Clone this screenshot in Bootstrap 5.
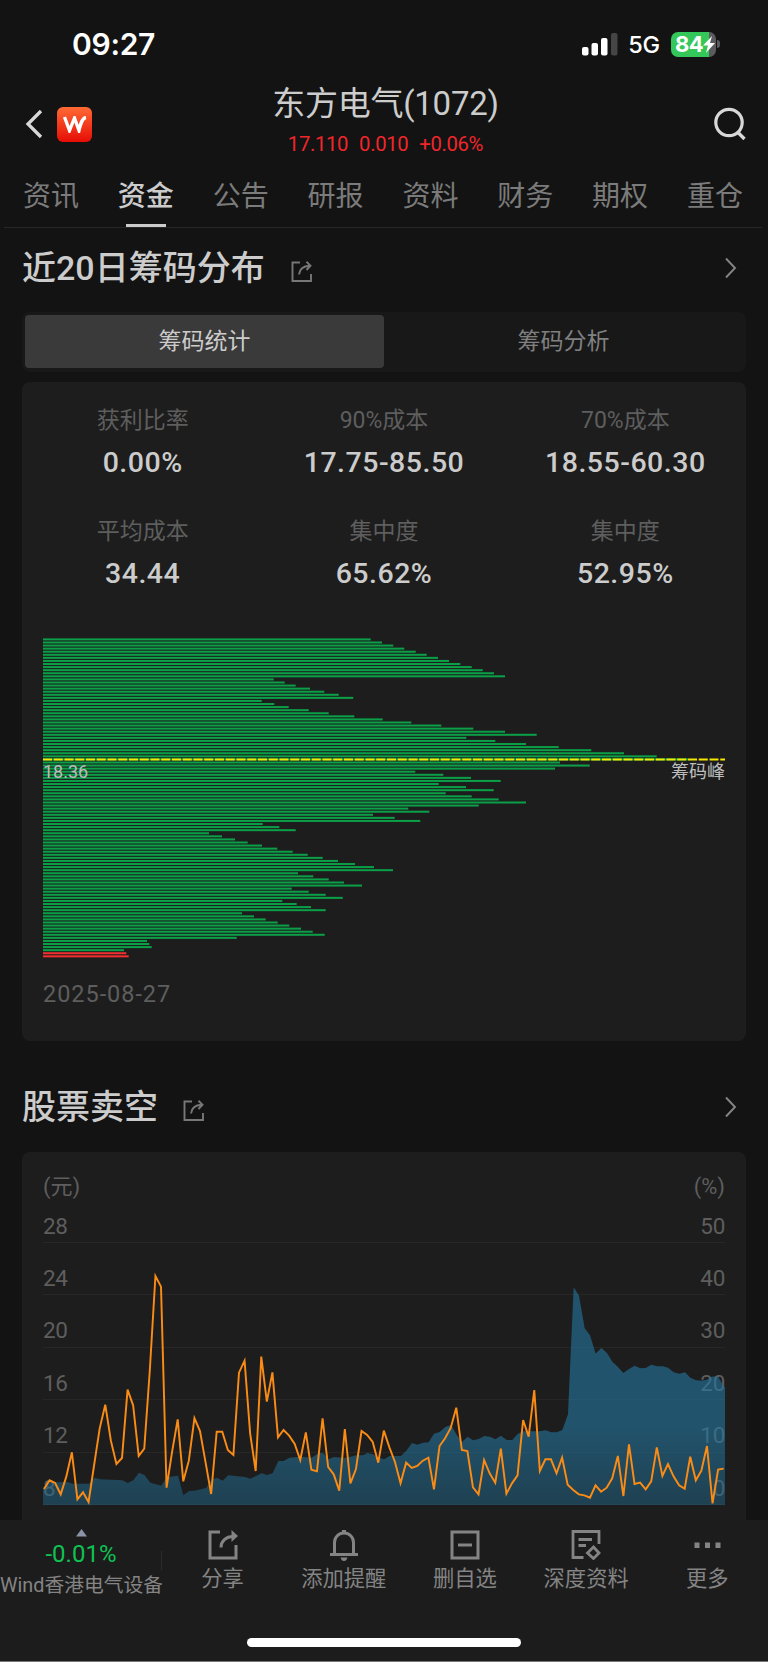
<!DOCTYPE html>
<html lang="zh-CN">
<head>
<meta charset="utf-8">
<meta name="viewport" content="width=device-width, initial-scale=1">
<title>东方电气(1072)</title>
<link href="https://cdn.jsdelivr.net/npm/bootstrap@5.3.0/dist/css/bootstrap.min.css" rel="stylesheet">
<style>
body{background:#131313;color:#ccc;font-family:Roboto,"Noto Sans CJK SC",sans-serif;height:1662px;overflow:hidden;line-height:1}
svg{display:block;flex:none}
.status{height:82px;padding:6px 48px 0 72px;font-family:Inter,sans-serif;color:#fff}
.clock{font-size:30px;font-weight:600;letter-spacing:-.3px}
.net{font-size:23.5px;font-weight:500;margin:1px 11px 0 10px;letter-spacing:-.2px}
.batt{width:45px;height:25px;border-radius:7px;background:linear-gradient(90deg,#34c759 38px,#5b5b5d 38px);font-size:22px;font-weight:700;padding-left:4px;letter-spacing:-.6px}
.batt-tip{width:3px;height:8px;border-radius:0 3px 3px 0;background:#5b5b5d;margin-left:1px}
.top-bar{height:84px;padding:0 22px 0 25px}
.app-logo{width:35px;height:35px;border-radius:6px;background:linear-gradient(#ff6a35,#e60d05);margin-left:14px}
.top-side{width:92px;padding-bottom:0}
.stock{font-size:33px;line-height:42px;letter-spacing:-.25px;font-weight:400}
.stock-box{margin-top:-9px}
.quote{font-size:20.3px;line-height:24px;color:#f0262b;gap:11px;margin-top:7px;letter-spacing:-.35px}
.tabs{height:62px;margin:0 6px 0 4px;padding:0 19px 0 19px;border-bottom:1px solid #272727;font-size:28px}
.tabs a{color:#7b7b7b;text-decoration:none;height:61px;line-height:61px;position:relative}
.tabs a.active{color:#ccc;font-weight:500}
.tabs a.active::after{content:"";position:absolute;left:8px;right:8px;bottom:0;height:3px;background:#ccc}
.section-head{padding:0 31px 0 22px}
.section-head h2{font-size:34px;font-weight:500;margin:0;line-height:48px}
.section-head .share{margin:7px 0 0 26px}
.seg{margin:0 22px;height:60px;padding:3px;border-radius:8px;background:#181818;font-size:23px;color:#808080}
.seg div{line-height:53px;border-radius:4px;height:53px;text-align:center;flex:1}
.seg .on{background:#3a3a3a;color:#ccc}
.panel{margin:0 22px;border-radius:8px;background:#1d1d1d}
.stat{height:111px;text-align:center}
.stat span{display:block;font-size:23px;line-height:32px;color:#5e5e5e}
.stat b{display:block;font-size:28.5px;line-height:40px;font-weight:500;margin-top:6px;letter-spacing:.5px}
.chips{position:relative;margin:11px 21px 0;height:320px}
.chip-cap{position:absolute;top:122px;font-size:18px;line-height:24px;color:#bdbdbd}
.dim{color:#5e5e5e}
.grid-row{height:52.4px;padding:24px 0 0;border-bottom:1px solid #272727;font-size:22.5px;line-height:22px;letter-spacing:-.3px}
#chip-panel{margin-top:10px;height:659px;padding-top:23px}
.date{margin:22px 21px 0;font-size:23.5px;line-height:28px;letter-spacing:.95px}
#short-panel{height:390px;padding:23px 21px 0}
.units{font-size:22px;line-height:24px;height:15.6px}
.bottom{height:142px;background:#1c1c1c;border-bottom:1px solid #777;color:#848484}
.index-box{width:162px;position:relative}
.chg{color:#0fc252;font-size:24px;line-height:28px;text-align:center;margin-top:3px}
.idx{font-size:19.8px;line-height:26px;margin-top:5px}
.sep{position:absolute;right:0;top:31px;width:1px;height:19px;background:#2c2c2c}
.nav-act{width:121.2px;font-size:21.3px;padding-top:10px;gap:5px}
.nav-act span{line-height:28px;white-space:nowrap}
.home-bar{position:absolute;left:247px;top:118px;width:274px;height:9px;border-radius:5px;background:#fff}
</style>
<script src="https://cdn.jsdelivr.net/npm/bootstrap@5.3.0/dist/js/bootstrap.bundle.min.js"></script>
</head>
<body>
<svg width="0" height="0" class="position-absolute">
<symbol id="share" viewBox="0 0 30 30"><path d="M12 2H2v26h26V15M13 17.5C13 11 18 6.5 25 6.5" fill="none" stroke="currentColor" stroke-width="3"/><path d="M23.5 0 30 6l-6.500 6z" fill="currentColor"/></symbol>
<symbol id="share-thin" viewBox="0 0 22 22"><path d="M9 1.500H1.500V20H20V13M8 13.500C8.500 8.500 12 5 18.500 4.700M15.500 .800l4 3.900L15.500 9" fill="none" stroke="currentColor" stroke-width="1.900"/></symbol>
<symbol id="more" viewBox="0 0 13 22"><path d="M2 1.500 11 11l-9 9.500" fill="none" stroke="currentColor" stroke-width="1.900"/></symbol>
</svg>

<div class="status d-flex align-items-center">
  <span class="clock me-auto">09:27</span>
  <svg width="36" height="23" viewBox="0 0 36 23"><g fill="#fff"><rect x="0" y="14" width="6.500" height="8.500" rx="2"/><rect x="9.500" y="10" width="6.500" height="12.500" rx="2"/><rect x="19" y="5" width="6.500" height="17.500" rx="2"/></g><rect x="29" width="6.500" height="22.500" rx="2" fill="#454545"/></svg>
  <span class="net">5G</span>
  <div class="batt d-flex align-items-center">84<svg width="12" height="17" viewBox="0 0 12 17"><path d="M9 0 0 9.500h5L3 17l9-10H7z" fill="#fff"/></svg></div>
  <div class="batt-tip"></div>
</div>

<header class="top-bar d-flex align-items-center justify-content-between">
  <div class="top-side d-flex align-items-center">
    <svg width="18" height="30" viewBox="0 0 18 30"><path d="M16 2 3 15l13 13" fill="none" stroke="#d8d8d8" stroke-width="3.300"/></svg>
    <div class="app-logo d-flex align-items-center justify-content-center"><svg width="24" height="17" viewBox="0 0 24 17"><path d="M1.500 1 6.500 14.500 11.500 2 16 14.500C17.500 8 19 2 23 1.500" fill="none" stroke="#fff" stroke-width="3.300"/></svg></div>
  </div>
  <div class="stock-box text-center">
    <div class="stock">东方电气(1072)</div>
    <div class="quote d-flex justify-content-center"><span>17.110</span><span>0.010</span><span>+0.06%</span></div>
  </div>
  <div class="top-side d-flex justify-content-end"><svg width="34" height="34" viewBox="0 0 34 34"><circle cx="17" cy="15.500" r="13.200" fill="none" stroke="#d8d8d8" stroke-width="3.200"/><path d="m25.500 25 7 7" stroke="#d8d8d8" stroke-width="3.400"/></svg></div>
</header>

<nav class="tabs d-flex justify-content-between">
  <a href="#">资讯</a><a href="#" class="active">资金</a><a href="#">公告</a><a href="#">研报</a><a href="#">资料</a><a href="#">财务</a><a href="#">期权</a><a href="#">重仓</a>
</nav>

<main>
  <div class="section-head d-flex align-items-center" style="height:84px;padding-bottom:4px">
    <h2>近20日筹码分布</h2><svg class="share" width="22" height="22" color="#777"><use href="#share-thin"/></svg>
    <svg class="ms-auto" width="13" height="22" color="#858585"><use href="#more"/></svg>
  </div>
  <div class="seg d-flex"><div class="on">筹码统计</div><div>筹码分析</div></div>

  <section class="panel" id="chip-panel">
    <div class="row g-0">
      <div class="col-4 stat"><span>获利比率</span><b>0.00%</b></div>
      <div class="col-4 stat"><span>90%成本</span><b>17.75-85.50</b></div>
      <div class="col-4 stat"><span>70%成本</span><b>18.55-60.30</b></div>
      <div class="col-4 stat"><span>平均成本</span><b>34.44</b></div>
      <div class="col-4 stat"><span>集中度</span><b>65.62%</b></div>
      <div class="col-4 stat"><span>集中度</span><b>52.95%</b></div>
    </div>
    <div class="chips">
      <svg id="chipChart" width="682" height="320"></svg>
      <span class="chip-cap start-0">18.36</span><span class="chip-cap end-0">筹码峰</span>
    </div>
    <div class="date dim">2025-08-27</div>
  </section>

  <div class="section-head d-flex align-items-center" style="height:111px;padding-top:21px">
    <h2>股票卖空</h2><svg class="share" style="margin-left:25px" width="22" height="22" color="#777"><use href="#share-thin"/></svg>
    <svg class="ms-auto" width="13" height="22" color="#858585"><use href="#more"/></svg>
  </div>
  <section class="panel" id="short-panel">
    <div class="units d-flex justify-content-between dim"><span>(元)</span><span>(%)</span></div>
    <div class="position-relative">
      <div class="dim">
        <div class="grid-row d-flex justify-content-between"><span>28</span><span>50</span></div>
        <div class="grid-row d-flex justify-content-between"><span>24</span><span>40</span></div>
        <div class="grid-row d-flex justify-content-between"><span>20</span><span>30</span></div>
        <div class="grid-row d-flex justify-content-between"><span>16</span><span>20</span></div>
        <div class="grid-row d-flex justify-content-between"><span>12</span><span>10</span></div>
        <div class="grid-row d-flex justify-content-between"><span>8</span><span>0</span></div>
      </div>
      <svg class="position-absolute bottom-0 start-0" width="682" height="262" viewBox="39 -51 2046 786">
        <defs><linearGradient id="sea" x1="0" y1="80" x2="0" y2="735" gradientUnits="userSpaceOnUse"><stop offset="0" stop-color="#2477a1" stop-opacity=".6"/><stop offset=".65" stop-color="#2477a1" stop-opacity=".6"/><stop offset="1" stop-color="#216587" stop-opacity=".5"/></linearGradient></defs>
        <path id="area" fill="url(#sea)"/>
        <path id="line" fill="none" stroke="#fa8c16" stroke-width="5.800"/>
      </svg>
    </div>
  </section>
</main>

<footer class="bottom fixed-bottom d-flex">
  <div class="index-box overflow-hidden text-nowrap">
    <svg class="mx-auto" style="margin-top:9px" width="11" height="8"><path d="M5.500 0 11 7.500H0z" fill="#8b93a6"/></svg>
    <div class="chg">-0.01%</div><div class="idx">Wind香港电气设备</div>
    <div class="sep"></div>
  </div>
  <div class="nav-act d-flex flex-column align-items-center"><svg width="30" height="30"><use href="#share"/></svg><span>分享</span></div>
  <div class="nav-act d-flex flex-column align-items-center"><svg width="30" height="31" viewBox="0 0 30 31" style="margin-bottom:-1px"><path d="M1 24.500h28M5.500 24V12.500a9.500 9.500 0 0 1 19 0V24" fill="none" stroke="currentColor" stroke-width="3"/><path d="M13 0h4v4h-4zM11.500 27.500h7Q17.500 31 15 31t-3.500-3.500z" fill="currentColor"/></svg><span>添加提醒</span></div>
  <div class="nav-act d-flex flex-column align-items-center"><svg width="30" height="30"><path d="M2 2h26v26H2zM8 15h14" fill="none" stroke="currentColor" stroke-width="3"/></svg><span>删自选</span></div>
  <div class="nav-act d-flex flex-column align-items-center"><svg width="30" height="30"><path d="M12.500 27.500H2V1.500h26V14M7.500 9.500H21M7.500 15.500H15M22.500 17l5.500 6-5.500 5.500L16.500 23z" fill="none" stroke="currentColor" stroke-width="2.800"/></svg><span>深度资料</span></div>
  <div class="nav-act d-flex flex-column align-items-center"><svg width="28" height="30"><path d="M1.500 12.500h5v5.500h-5zM12 12.500h5v5.500h-5zM22.500 12.500h5v5.500h-5z" fill="currentColor"/></svg><span>更多</span></div>
  <div class="home-bar"></div>
</footer>

<script>
const chips=[327.7,339,350.3,361.3,372.7,383.7,395,406,417.3,428.7,439.7,451,462,230.7,241.7,252.7,267,281.3,295.7,310.3,218.7,231.3,245.7,265.7,285.7,311.3,339.7,368.3,398.3,430.3,462,493.7,423.3,452.3,483,515.7,548.3,581,613.7,645.3,517,546.7,512,372.3,400.3,428,457.7,395.7,423,450.7,402.7,428.7,455.7,483,435.7,365.3,386.3,330,351.7,377.3,219.7,236.3,252.7,166,179,192,204.7,219,234.3,249.7,264.7,279.7,295,312,331,350,255,270.3,285.7,301,319,248.7,265.7,282.7,299.7,239.3,253.7,268,282.7,199,211,222.7,234.7,246.3,258,269.7,281.7,193.7,104,106.3,108.7,81,83.3,85.7];
document.getElementById('chipChart').innerHTML=chips.map((w,i)=>`<rect y="${(0.4+i*3.077).toFixed(2)}" width="${w}" height="2" fill="${i>101?'#f3302f':'#0ba048'}"/>`).join('')+'<path d="M0 121.500H682" stroke="#f5ea00" stroke-width="2" stroke-dasharray="9 1.750"/>';
const price=[687,661,669,703,650,577,718,697,726,615,505,434,542,612,594,389,436,588,566,330,48,80,683,575,478,664,602,474,513,607,702,515,515,570,585,338,302,520,633,290,425,337,532,510,527,552,600,517,629,634,475,621,643,692,507,670,627,513,525,546,608,512,562,606,670,608,624,618,602,593,688,558,535,504,443,570,573,682,703,600,640,668,566,701,670,646,480,530,390,633,598,598,640,593,674,690,703,706,713,676,695,683,655,588,708,553,672,668,688,664,562,648,612,649,676,686,590,661,632,558,730,629,626];
const step=(2081-42)/(price.length-1);
document.getElementById('line').setAttribute('d','M'+price.map((y,i)=>(42+i*step).toFixed(1)+' '+y).join('L'));
const area=[[39,684],[59,664],[76,667],[112,666],[127,671],[177,671],[194,653],[210,658],[277,661],[293,669],[310,661],[327,638],[344,646],[361,668],[394,677],[410,652],[444,647],[460,706],[478,693],[494,692],[528,684],[544,660],[561,653],[578,662],[595,646],[645,651],[661,656],[678,648],[695,640],[711,645],[728,640],[745,603],[761,603],[778,593],[811,590],[845,593],[862,582],[870,578],[880,580],[895,598],[912,591],[945,594],[962,590],[979,586],[1000,586],[1012,579],[1029,583],[1040,590],[1062,598],[1079,588],[1113,588],[1129,572],[1146,549],[1162,554],[1179,548],[1196,547],[1212,521],[1229,516],[1246,501],[1263,495],[1279,523],[1296,546],[1313,530],[1329,541],[1346,537],[1363,528],[1380,530],[1396,538],[1413,527],[1430,540],[1447,540],[1463,522],[1480,514],[1530,514],[1547,511],[1564,517],[1580,517],[1597,510],[1614,463],[1631,82],[1647,107],[1664,205],[1680,226],[1697,281],[1714,264],[1731,279],[1747,305],[1764,321],[1780,339],[1797,327],[1814,317],[1831,325],[1847,324],[1864,314],[1881,319],[1898,319],[1914,323],[1931,337],[1948,341],[1965,337],[1981,353],[1998,361],[2015,362],[2031,359],[2040,352],[2055,349],[2065,351],[2080,378],[2085,382]];
document.getElementById('area').setAttribute('d','M39 735L'+area.map(p=>p.join(' ')).join('L')+'L2085 735Z');
</script>
</body>
</html>
